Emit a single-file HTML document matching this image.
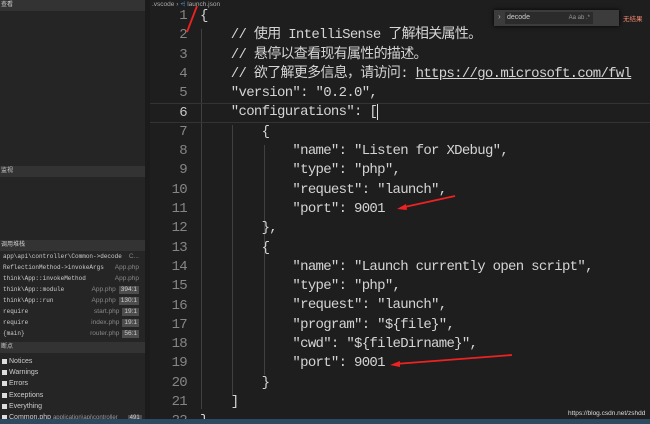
<!DOCTYPE html>
<html style="overflow:hidden;width:650px;height:424px"><head><meta charset="utf-8"><style>
*{margin:0;padding:0;box-sizing:border-box}
body{width:650px;height:424px;overflow:hidden;background:#1e1e1e;position:relative;font-family:"Liberation Sans","Noto Sans CJK SC",sans-serif}
#side{position:absolute;left:0;top:0;width:145px;height:424px;background:#252526}
.hd{position:absolute;left:0;width:145px;height:11px;background:#333334;color:#ccc;font-size:6px;line-height:11px;padding-left:1px}
.row{position:absolute;left:0;width:145px;height:11px;font-size:6.5px;line-height:11px;color:#ccc}
.row .l{position:absolute;left:3px;font-family:"Liberation Mono",monospace;font-size:6px}
.row .f{position:absolute;right:6px;color:#888}
.row .n{display:inline-block;background:#4d4d4d;color:#ccc;padding:0 2px;line-height:8px;margin-left:3px}
.cb{position:absolute;left:1px;width:145px;height:11px;font-size:7px;line-height:11px;color:#ccc;padding-left:8px}
.cb:before{content:"";position:absolute;left:1px;top:3px;width:5px;height:5px;background:#ddd}
#sep{position:absolute;left:145px;top:0;width:5px;height:424px;background:#1b1b1b}
#bread{position:absolute;left:152px;top:0;font-size:6.5px;color:#aaa;line-height:9px}
#ed{position:absolute;left:150px;top:7px;width:500px;height:417px;overflow:hidden;font-family:"Liberation Mono","Noto Sans CJK SC",monospace;font-size:14px;letter-spacing:-0.7px;line-height:19.3px;color:#d4d4d4}
.ln{position:absolute;left:0;width:37px;text-align:right;color:#858585}
.cd{position:absolute;left:50px;white-space:pre}
.g{position:absolute;top:29px;width:1px;background:#404040}
#find{position:absolute;left:494px;top:10px;width:125px;height:16px;background:#3c3c3c;box-shadow:0 0 4px #000}
#status{position:absolute;left:0;top:419px;width:650px;height:5px;background:#2d4a60}
</style></head><body>
<div id="side">
<div class="hd" style="top:0">查看</div>
<div class="hd" style="top:166px">监视</div>
<div class="hd" style="top:240px">调用堆栈</div>
<div class="row" style="top:251px"><span class="l">app\api\controller\Common->decode</span><span class="f">C...</span></div>
<div class="row" style="top:262px"><span class="l">ReflectionMethod->invokeArgs</span><span class="f">App.php</span></div>
<div class="row" style="top:273px"><span class="l">think\App::invokeMethod</span><span class="f">App.php</span></div>
<div class="row" style="top:284px"><span class="l">think\App::module</span><span class="f">App.php<span class="n">394:1</span></span></div>
<div class="row" style="top:295px"><span class="l">think\App::run</span><span class="f">App.php<span class="n">130:1</span></span></div>
<div class="row" style="top:306px"><span class="l">require</span><span class="f">start.php<span class="n">19:1</span></span></div>
<div class="row" style="top:317px"><span class="l">require</span><span class="f">index.php<span class="n">19:1</span></span></div>
<div class="row" style="top:328px"><span class="l">{main}</span><span class="f">router.php<span class="n">56:1</span></span></div>
<div class="hd" style="top:342px">断点</div>
<div class="cb" style="top:356px">Notices</div>
<div class="cb" style="top:367px">Warnings</div>
<div class="cb" style="top:378px">Errors</div>
<div class="cb" style="top:390px">Exceptions</div>
<div class="cb" style="top:401px">Everything</div>
<div class="cb" style="top:412px">Common.php <span style="color:#999;font-size:6px">application\api\controller</span> <span style="background:#4d4d4d;font-size:6px;padding:0 2px;margin-left:8px">491</span></div>
</div>
<div id="sep"></div>
<div id="bread">.vscode › <span style="color:#3b9be0">⩤</span> launch.json</div>
<div class="g" style="left:201px;height:380px"></div>
<div class="g" style="left:232px;top:125px;height:270px"></div>
<div class="g" style="left:264px;top:145px;height:230px"></div>
<div style="position:absolute;left:150px;top:103px;width:500px;height:20px;border-top:1px solid #333;border-bottom:1px solid #333"></div>
<div id="ed">
<div class="ln" style="top:0">1</div><div class="ln" style="top:19.3px">2</div><div class="ln" style="top:38.6px">3</div><div class="ln" style="top:57.9px">4</div><div class="ln" style="top:77.2px">5</div><div class="ln" style="top:96.5px;color:#c6c6c6">6</div><div class="ln" style="top:115.8px">7</div><div class="ln" style="top:135.1px">8</div><div class="ln" style="top:154.4px">9</div><div class="ln" style="top:173.7px">10</div><div class="ln" style="top:193px">11</div><div class="ln" style="top:212.3px">12</div><div class="ln" style="top:231.6px">13</div><div class="ln" style="top:250.9px">14</div><div class="ln" style="top:270.2px">15</div><div class="ln" style="top:289.5px">16</div><div class="ln" style="top:308.8px">17</div><div class="ln" style="top:328.1px">18</div><div class="ln" style="top:347.4px">19</div><div class="ln" style="top:366.7px">20</div><div class="ln" style="top:386px">21</div><div class="ln" style="top:405.3px">22</div>
<div class="cd" style="top:0">{
    // 使用 IntelliSense 了解相关属性。
    // 悬停以查看现有属性的描述。
    // 欲了解更多信息，请访问: <u>https://go.microsoft.com/fwl</u>
    "version": "0.2.0",
    "configurations": [<span style="border-left:1px solid #ddd"></span>
        {
            "name": "Listen for XDebug",
            "type": "php",
            "request": "launch",
            "port": 9001
        },
        {
            "name": "Launch currently open script",
            "type": "php",
            "request": "launch",
            "program": "${file}",
            "cwd": "${fileDirname}",
            "port": 9001
        }
    ]
}</div>
</div>
<div id="find"><span style="position:absolute;left:4px;top:2px;color:#aaa;font-size:8px">›</span><div style="position:absolute;left:11px;top:2px;width:88px;height:12px;background:#2b2b2b;color:#ccc;font-size:7px;line-height:12px;padding-left:2px">decode<span style="position:absolute;right:3px;color:#999;font-size:6px">Aa ab .*</span></div></div>
<div style="position:absolute;left:623px;top:13px;font-size:6.5px;color:#f48771">无结果</div>
<svg style="position:absolute;left:0;top:0" width="650" height="424">
<line x1="187" y1="32" x2="197" y2="6" stroke="#e22" stroke-width="1.8"/>
<line x1="455" y1="196" x2="400" y2="208" stroke="#e22" stroke-width="1.8"/>
<polygon points="397,209 406,204 407,210" fill="#e22"/>
<line x1="512" y1="355" x2="395" y2="364" stroke="#e22" stroke-width="1.8"/>
<polygon points="390,365 400,361 400,367" fill="#e22"/>
</svg>
<div style="position:absolute;left:568px;top:410px;font-size:6.5px;color:#ddd">https://blog.csdn.net/zshdd</div>
<div id="status"></div>
</body></html>
